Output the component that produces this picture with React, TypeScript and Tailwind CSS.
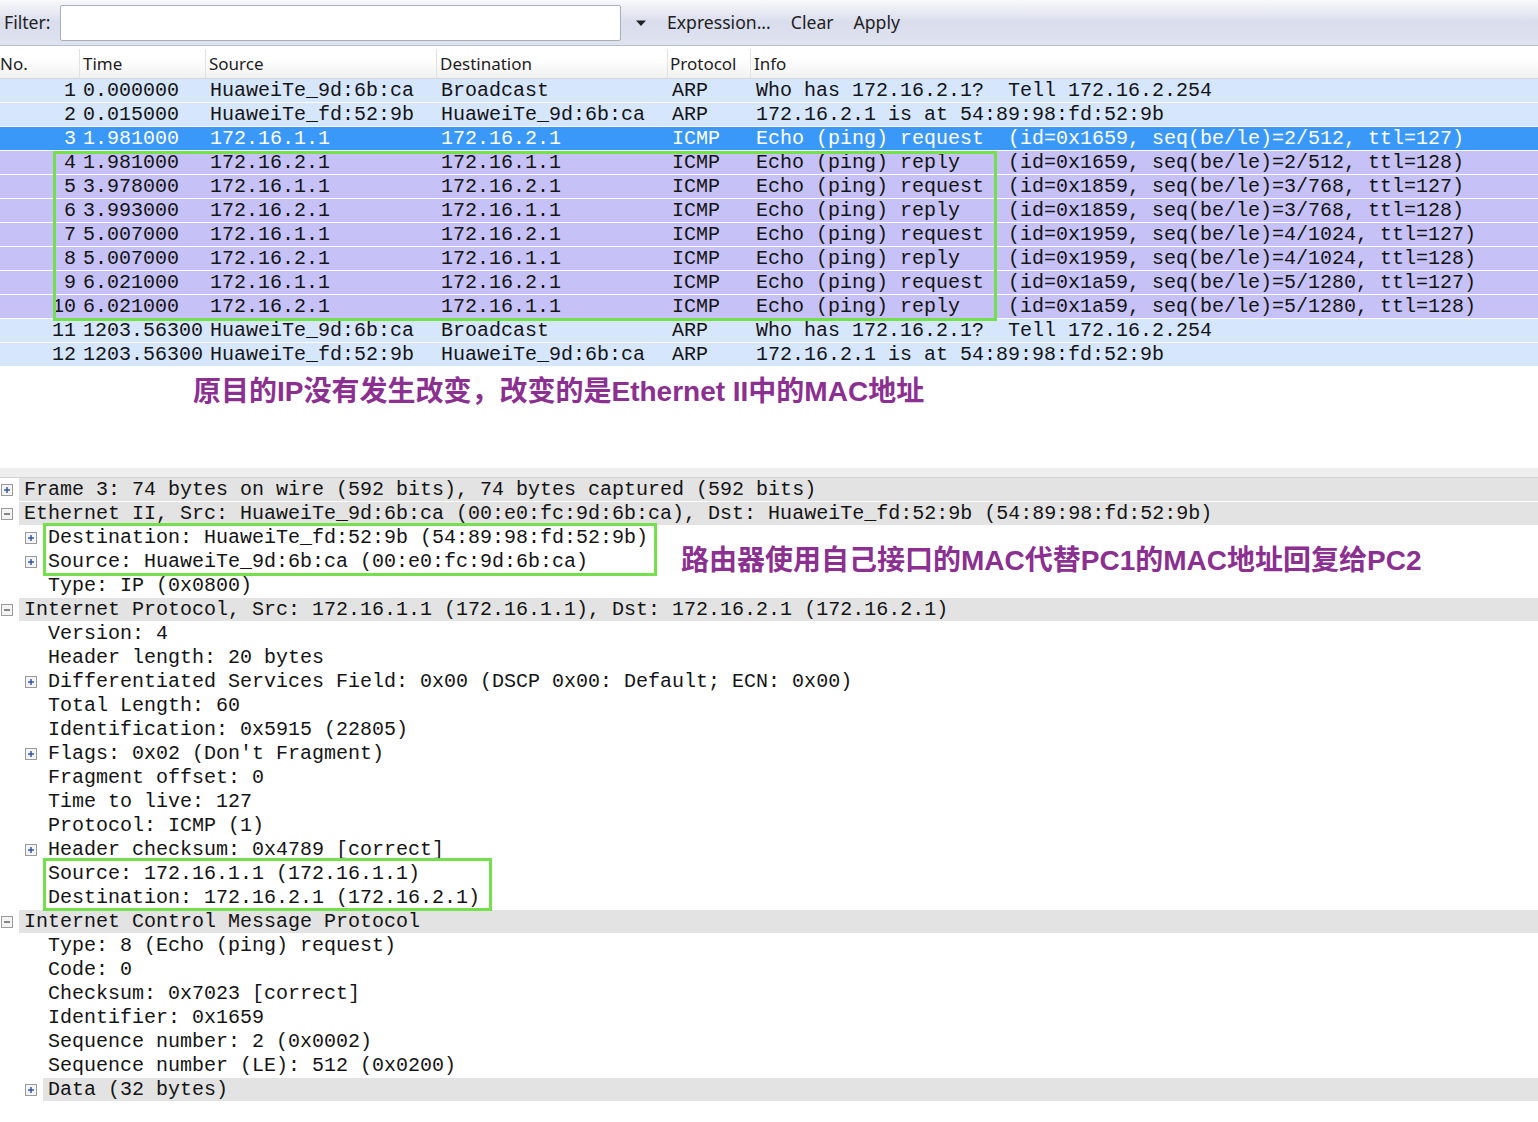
const mono = "font-['Liberation_Mono','DejaVu_Sans_Mono',monospace] text-[20px] leading-[22px]";
const ui = "font-['Noto_Sans','Open_Sans',sans-serif]";
const note =
  "font-['Liberation_Sans','Noto_Sans_CJK_SC',sans-serif] font-bold text-[28px] leading-9 text-[#8b2f90] whitespace-pre";

type Packet = {
  no: number;
  time: string;
  src: string;
  dst: string;
  proto: string;
  info: string;
  kind: "arp" | "icmp" | "sel";
};

const packets: Packet[] = [
  { no: 1, time: "0.000000", src: "HuaweiTe_9d:6b:ca", dst: "Broadcast", proto: "ARP", info: "Who has 172.16.2.1?  Tell 172.16.2.254", kind: "arp" },
  { no: 2, time: "0.015000", src: "HuaweiTe_fd:52:9b", dst: "HuaweiTe_9d:6b:ca", proto: "ARP", info: "172.16.2.1 is at 54:89:98:fd:52:9b", kind: "arp" },
  { no: 3, time: "1.981000", src: "172.16.1.1", dst: "172.16.2.1", proto: "ICMP", info: "Echo (ping) request  (id=0x1659, seq(be/le)=2/512, ttl=127)", kind: "sel" },
  { no: 4, time: "1.981000", src: "172.16.2.1", dst: "172.16.1.1", proto: "ICMP", info: "Echo (ping) reply    (id=0x1659, seq(be/le)=2/512, ttl=128)", kind: "icmp" },
  { no: 5, time: "3.978000", src: "172.16.1.1", dst: "172.16.2.1", proto: "ICMP", info: "Echo (ping) request  (id=0x1859, seq(be/le)=3/768, ttl=127)", kind: "icmp" },
  { no: 6, time: "3.993000", src: "172.16.2.1", dst: "172.16.1.1", proto: "ICMP", info: "Echo (ping) reply    (id=0x1859, seq(be/le)=3/768, ttl=128)", kind: "icmp" },
  { no: 7, time: "5.007000", src: "172.16.1.1", dst: "172.16.2.1", proto: "ICMP", info: "Echo (ping) request  (id=0x1959, seq(be/le)=4/1024, ttl=127)", kind: "icmp" },
  { no: 8, time: "5.007000", src: "172.16.2.1", dst: "172.16.1.1", proto: "ICMP", info: "Echo (ping) reply    (id=0x1959, seq(be/le)=4/1024, ttl=128)", kind: "icmp" },
  { no: 9, time: "6.021000", src: "172.16.1.1", dst: "172.16.2.1", proto: "ICMP", info: "Echo (ping) request  (id=0x1a59, seq(be/le)=5/1280, ttl=127)", kind: "icmp" },
  { no: 10, time: "6.021000", src: "172.16.2.1", dst: "172.16.1.1", proto: "ICMP", info: "Echo (ping) reply    (id=0x1a59, seq(be/le)=5/1280, ttl=128)", kind: "icmp" },
  { no: 11, time: "1203.56300", src: "HuaweiTe_9d:6b:ca", dst: "Broadcast", proto: "ARP", info: "Who has 172.16.2.1?  Tell 172.16.2.254", kind: "arp" },
  { no: 12, time: "1203.56300", src: "HuaweiTe_fd:52:9b", dst: "HuaweiTe_9d:6b:ca", proto: "ARP", info: "172.16.2.1 is at 54:89:98:fd:52:9b", kind: "arp" },
];

// level, expander ("+" | "-" | ""), text, shaded
const tree: [number, string, string, boolean][] = [
  [0, "+", "Frame 3: 74 bytes on wire (592 bits), 74 bytes captured (592 bits)", true],
  [0, "-", "Ethernet II, Src: HuaweiTe_9d:6b:ca (00:e0:fc:9d:6b:ca), Dst: HuaweiTe_fd:52:9b (54:89:98:fd:52:9b)", true],
  [1, "+", "Destination: HuaweiTe_fd:52:9b (54:89:98:fd:52:9b)", false],
  [1, "+", "Source: HuaweiTe_9d:6b:ca (00:e0:fc:9d:6b:ca)", false],
  [1, "", "Type: IP (0x0800)", false],
  [0, "-", "Internet Protocol, Src: 172.16.1.1 (172.16.1.1), Dst: 172.16.2.1 (172.16.2.1)", true],
  [1, "", "Version: 4", false],
  [1, "", "Header length: 20 bytes", false],
  [1, "+", "Differentiated Services Field: 0x00 (DSCP 0x00: Default; ECN: 0x00)", false],
  [1, "", "Total Length: 60", false],
  [1, "", "Identification: 0x5915 (22805)", false],
  [1, "+", "Flags: 0x02 (Don't Fragment)", false],
  [1, "", "Fragment offset: 0", false],
  [1, "", "Time to live: 127", false],
  [1, "", "Protocol: ICMP (1)", false],
  [1, "+", "Header checksum: 0x4789 [correct]", false],
  [1, "", "Source: 172.16.1.1 (172.16.1.1)", false],
  [1, "", "Destination: 172.16.2.1 (172.16.2.1)", false],
  [0, "-", "Internet Control Message Protocol", true],
  [1, "", "Type: 8 (Echo (ping) request)", false],
  [1, "", "Code: 0", false],
  [1, "", "Checksum: 0x7023 [correct]", false],
  [1, "", "Identifier: 0x1659", false],
  [1, "", "Sequence number: 2 (0x0002)", false],
  [1, "", "Sequence number (LE): 512 (0x0200)", false],
  [1, "+", "Data (32 bytes)", true],
];

const rowBg = {
  arp: "bg-[#d6e6fc] text-[#141414]",
  icmp: "bg-[#c6c2f7] text-[#141414]",
  sel: "bg-[#3a98f9] text-white",
};

const Expander = ({ sign }: { sign: string }) => (
  <svg width="12" height="12" viewBox="0 0 12 12">
    <rect x="0.5" y="0.5" width="11" height="11" fill="#f4f4f4" stroke="#9b9b9b" />
    <line x1="3" y1="6" x2="9" y2="6" stroke={sign === "+" ? "#2a4f9c" : "#555"} strokeWidth="1.4" />
    {sign === "+" && <line x1="6" y1="3" x2="6" y2="9" stroke="#2a4f9c" strokeWidth="1.4" />}
  </svg>
);

export default function App() {
  return (
    <div className="min-h-[1122px] w-[1538px] overflow-hidden bg-white">
      {/* filter toolbar */}
      <div className={`flex h-[46px] items-center border-b border-[#b9bdc9] bg-gradient-to-b from-[#f9f9fb] via-[#d9ddec] to-[#e0e4f0] text-[17.6px] text-[#222] ${ui}`}>
        <span className="w-[60px] pl-[4px]">Filter:</span>
        <div className="h-[36px] w-[561px] rounded-[2px] border border-[#a9adb6] bg-white" />
        <svg className="ml-[14px]" width="12" height="8" viewBox="0 0 12 8">
          <path d="M1 1.5 L11 1.5 L6 7 Z" fill="#222" />
        </svg>
        <span className="ml-[20px]">Expression...</span>
        <span className="ml-[20px]">Clear</span>
        <span className="ml-[20px]">Apply</span>
      </div>

      {/* column headers */}
      <div className={`flex h-[33px] items-center border-b border-[#d7d7d7] bg-gradient-to-b from-white from-40% to-[#f1f1f1] pt-[3px] text-[17px] text-[#1e1e1e] ${ui}`}>
        <div className="flex h-full w-[80px] items-center border-r border-[#e2e2e2]">No.</div>
        <div className="flex h-full w-[126px] items-center border-r border-[#e2e2e2] pl-[3px]">Time</div>
        <div className="flex h-full w-[231px] items-center border-r border-[#e2e2e2] pl-[3px]">Source</div>
        <div className="flex h-full w-[231px] items-center border-r border-[#e2e2e2] pl-[3px]">Destination</div>
        <div className="flex h-full w-[83px] items-center border-r border-[#e2e2e2] pl-[2px]">Protocol</div>
        <div className="flex h-full items-center pl-[3px]">Info</div>
      </div>

      {/* packet list */}
      <div className={`relative ${mono}`}>
        {packets.map((p) => (
          <div key={p.no} className={`flex h-6 items-start border-b border-white pt-[1px] whitespace-pre ${rowBg[p.kind]}`}>
            <div className="w-[80px] pr-[4px] text-right">{p.no}</div>
            <div className="w-[126px] pl-[3px]">{p.time}</div>
            <div className="w-[231px] pl-[4px]">{p.src}</div>
            <div className="w-[231px] pl-[4px]">{p.dst}</div>
            <div className="w-[83px] pl-[4px]">{p.proto}</div>
            <div className="pl-[5px]">{p.info}</div>
          </div>
        ))}
        <div className="absolute left-[53px] top-[72px] h-[170px] w-[944px] border-[3px] border-[#74e04c]" />
      </div>

      {/* note 1 */}
      <div className="h-[101px] pl-[193px] pt-[7px]">
        <div className={note}>原目的IP没有发生改变，改变的是Ethernet II中的MAC地址</div>
      </div>

      {/* pane splitter */}
      <div className="h-[10px] border-b border-[#d3d3d3] bg-[#eeeeee]" />

      {/* packet details */}
      <div className={`relative text-[#141414] ${mono}`}>
        {tree.map(([level, sign, text, shaded], i) => (
          <div key={i} className="flex h-6 border-b border-white">
            <div className={`flex shrink-0 items-center ${level === 0 ? "w-[19px] pl-[1px]" : "w-[43px] pl-[25px]"}`}>
              {sign && <Expander sign={sign} />}
            </div>
            <div className={`flex-1 whitespace-pre pl-[5px] pt-[1px] ${shaded ? "bg-[#e3e3e3]" : ""}`}>{text}</div>
          </div>
        ))}
        <div className="absolute left-[43px] top-[45px] h-[53px] w-[614px] border-[3px] border-[#74e04c]" />
        <div className={`absolute left-[681px] top-[65px] ${note}`}>路由器使用自己接口的MAC代替PC1的MAC地址回复给PC2</div>
        <div className="absolute left-[43px] top-[380px] h-[53px] w-[449px] border-[3px] border-[#74e04c]" />
      </div>
    </div>
  );
}
